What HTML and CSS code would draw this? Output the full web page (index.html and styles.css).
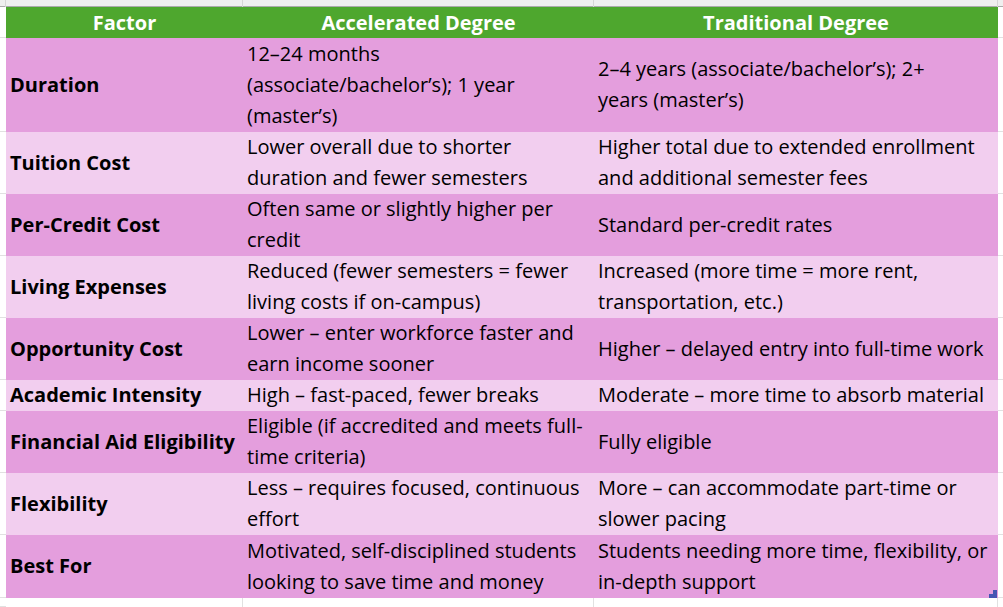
FILE: index.html
```html
<!DOCTYPE html>
<html>
<head>
<meta charset="utf-8">
<link rel="stylesheet" href="styles.css">
</head>
<body>
<div class="sheet">
  <div class="hd gut"></div><div class="hd"></div><div class="hd"></div><div class="hd"></div><div class="hd end"></div>

  <div class="gut"></div>
  <div class="c th">Factor</div>
  <div class="c th">Accelerated Degree</div>
  <div class="c th">Traditional Degree</div>
  <div class="gut r"></div>

  <div class="gut"></div>
  <div class="c dk b">Duration</div>
  <div class="c dk">12–24 months<br>(associate/bachelor’s); 1 year<br>(master’s)</div>
  <div class="c dk">2–4 years (associate/bachelor’s); 2+<br>years (master’s)</div>
  <div class="gut r"></div>

  <div class="gut"></div>
  <div class="c lt b">Tuition Cost</div>
  <div class="c lt">Lower overall due to shorter<br>duration and fewer semesters</div>
  <div class="c lt">Higher total due to extended enrollment<br>and additional semester fees</div>
  <div class="gut r"></div>

  <div class="gut"></div>
  <div class="c dk b">Per-Credit Cost</div>
  <div class="c dk">Often same or slightly higher per<br>credit</div>
  <div class="c dk">Standard per-credit rates</div>
  <div class="gut r"></div>

  <div class="gut"></div>
  <div class="c lt b">Living Expenses</div>
  <div class="c lt">Reduced (fewer semesters = fewer<br>living costs if on-campus)</div>
  <div class="c lt">Increased (more time = more rent,<br>transportation, etc.)</div>
  <div class="gut r"></div>

  <div class="gut"></div>
  <div class="c dk b">Opportunity Cost</div>
  <div class="c dk">Lower – enter workforce faster and<br>earn income sooner</div>
  <div class="c dk">Higher – delayed entry into full-time work</div>
  <div class="gut r"></div>

  <div class="gut"></div>
  <div class="c lt b">Academic Intensity</div>
  <div class="c lt">High – fast-paced, fewer breaks</div>
  <div class="c lt">Moderate – more time to absorb material</div>
  <div class="gut r"></div>

  <div class="gut"></div>
  <div class="c dk b">Financial Aid Eligibility</div>
  <div class="c dk">Eligible (if accredited and meets full-<br>time criteria)</div>
  <div class="c dk">Fully eligible</div>
  <div class="gut r"></div>

  <div class="gut"></div>
  <div class="c lt b">Flexibility</div>
  <div class="c lt">Less – requires focused, continuous<br>effort</div>
  <div class="c lt">More – can accommodate part-time or<br>slower pacing</div>
  <div class="gut r"></div>

  <div class="gut"></div>
  <div class="c dk b">Best For</div>
  <div class="c dk">Motivated, self-disciplined students<br>looking to save time and money</div>
  <div class="c dk last">Students needing more time, flexibility, or<br>in-depth support<span class="handle"><span class="h1"></span><span class="h2"></span></span></div>
  <div class="gut r"></div>

  <div class="gut foot"></div><div class="foot vl"></div><div class="foot vl"></div><div class="foot vl"></div><div class="foot"></div>
</div>
</body>
</html>
```

FILE: styles.css
```css
html, body {
  margin: 0;
  padding: 0;
  background: #ffffff;
}
body {
  width: 1003px;
  height: 607px;
  overflow: hidden;
  font-family: "Open Sans", "Noto Sans", sans-serif;
}
.sheet {
  display: grid;
  grid-template-columns: 6px 237px 351px 404px 1fr;
  grid-template-rows: 7px 31px 94px 62px 62px 62px 62px 31px 62px 62px 63px 1fr;
  height: 607px;
}
.hd {
  background: #efefef;
  box-shadow: inset -1px 0 #d6d6d6, inset 0 -1px #ababab;
}
.hd.end {
  box-shadow: inset 0 -1px #ababab;
}
.gut {
  background: #ffffff;
  box-shadow: inset 0 -1px #e1e1e1;
}
.hd.gut {
  background: #efefef;
  box-shadow: inset -1px 0 #d6d6d6, inset 0 -1px #ababab;
}
.foot {
  background: #ffffff;
}
.foot.vl {
  box-shadow: inset -1px 0 #e1e1e1;
}
.c {
  display: flex;
  flex-direction: column;
  justify-content: center;
  padding: 0 4px 2px 4px;
  font-size: 20px;
  line-height: 31px;
  color: #000000;
  white-space: nowrap;
  overflow: visible;
  position: relative;
}
.th {
  background: #4ea72e;
  color: #ffffff;
  font-weight: 700;
  text-align: center;
  padding-bottom: 0;
}
.dk {
  background: #e49edd;
}
.lt {
  background: #f2ceef;
}
.b {
  font-weight: 700;
}
.handle {
  position: absolute;
  right: 1px;
  bottom: 0;
  width: 8px;
  height: 8px;
}
.h1 {
  position: absolute;
  left: 0;
  bottom: 0;
  width: 8px;
  height: 4px;
  background: #4556b3;
}
.h2 {
  position: absolute;
  right: 0;
  top: 0;
  width: 4px;
  height: 8px;
  background: #4556b3;
}
```
